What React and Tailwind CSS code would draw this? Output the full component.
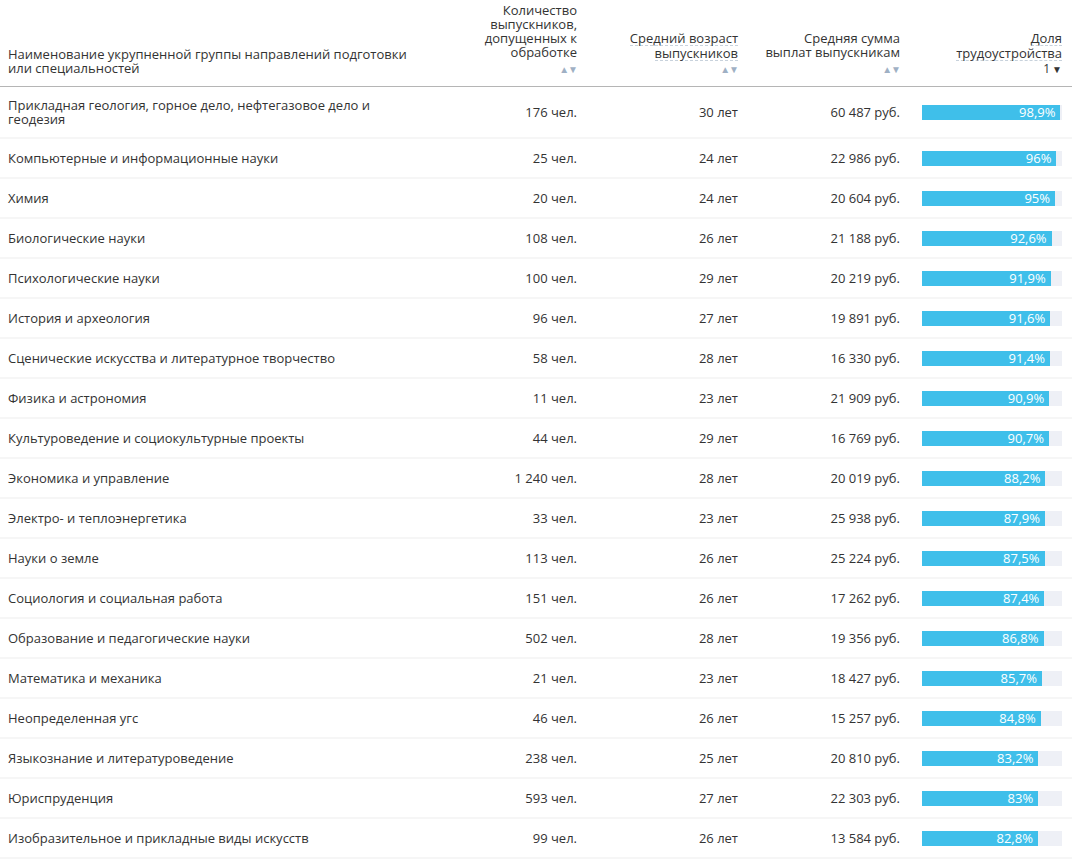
import React from "react";

const rows = [
  ["Прикладная геология, горное дело, нефтегазовое дело и геодезия", "176 чел.", "30 лет", "60 487 руб.", 98.9],
  ["Компьютерные и информационные науки", "25 чел.", "24 лет", "22 986 руб.", 96],
  ["Химия", "20 чел.", "24 лет", "20 604 руб.", 95],
  ["Биологические науки", "108 чел.", "26 лет", "21 188 руб.", 92.6],
  ["Психологические науки", "100 чел.", "29 лет", "20 219 руб.", 91.9],
  ["История и археология", "96 чел.", "27 лет", "19 891 руб.", 91.6],
  ["Сценические искусства и литературное творчество", "58 чел.", "28 лет", "16 330 руб.", 91.4],
  ["Физика и астрономия", "11 чел.", "23 лет", "21 909 руб.", 90.9],
  ["Культуроведение и социокультурные проекты", "44 чел.", "29 лет", "16 769 руб.", 90.7],
  ["Экономика и управление", "1 240 чел.", "28 лет", "20 019 руб.", 88.2],
  ["Электро- и теплоэнергетика", "33 чел.", "23 лет", "25 938 руб.", 87.9],
  ["Науки о земле", "113 чел.", "26 лет", "25 224 руб.", 87.5],
  ["Социология и социальная работа", "151 чел.", "26 лет", "17 262 руб.", 87.4],
  ["Образование и педагогические науки", "502 чел.", "28 лет", "19 356 руб.", 86.8],
  ["Математика и механика", "21 чел.", "23 лет", "18 427 руб.", 85.7],
  ["Неопределенная угс", "46 чел.", "26 лет", "15 257 руб.", 84.8],
  ["Языкознание и литературоведение", "238 чел.", "25 лет", "20 810 руб.", 83.2],
  ["Юриспруденция", "593 чел.", "27 лет", "22 303 руб.", 83],
  ["Изобразительное и прикладные виды искусств", "99 чел.", "26 лет", "13 584 руб.", 82.8],
];

const grid = "grid grid-cols-[440px_145px_161px_162px_164px]";

function Sort() {
  return (
    <div className="h-[14px] leading-[14px] text-[10px] text-[#9fb0c4] tracking-[-1px]">▲▼</div>
  );
}

function fmt(v) {
  return String(v).replace(".", ",") + "%";
}

export default function App() {
  return (
    <div
      className="w-[1072px] bg-white text-[#333] text-[13px] leading-[14px]"
      style={{ fontFamily: '"Open Sans", "Liberation Sans", sans-serif' }}
    >
      <div className={`${grid} h-[87px] border-b border-[#b5b5b5] items-end pb-[10px]`}>
        <div className="pl-2 pb-[1px]">
          Наименование укрупненной группы направлений подготовки
          <br />
          или специальностей
        </div>
        <div className="pr-2 text-right">
          <div>Количество<br />выпускников,<br />допущенных к<br />обработке</div>
          <div className="mt-[3px]"><Sort /></div>
        </div>
        <div className="pr-2 text-right">
          <div className="flex flex-col items-end">
            <span className="border-b border-dashed border-[#c8d2dc]">Средний возраст</span>
            <span className="border-b border-dashed border-[#c8d2dc]">выпускников</span>
          </div>
          <div className="mt-[1px]"><Sort /></div>
        </div>
        <div className="pr-2 text-right">
          <div>Средняя сумма<br />выплат выпускникам</div>
          <div className="mt-[3px]"><Sort /></div>
        </div>
        <div className="pr-[10px] text-right">
          <div className="flex flex-col items-end">
            <span className="border-b border-dashed border-[#c8d2dc]">Доля</span>
            <span className="border-b border-dashed border-[#c8d2dc]">трудоустройства</span>
          </div>
          <div className="mt-[1px] h-[14px] leading-[14px] text-[12px]">1<span className="text-[10px] ml-[2px]">▼</span></div>
        </div>
      </div>
      {rows.map((r, i) => (
        <div
          key={i}
          className={`${grid} items-center border-b-2 border-[#f6f6f6] ${i === 0 ? "h-[52px]" : "h-[40px]"}`}
        >
          <div className="pl-2 pr-4">{i === 0 ? <>Прикладная геология, горное дело, нефтегазовое дело и<br />геодезия</> : r[0]}</div>
          <div className="pr-2 text-right">{r[1]}</div>
          <div className="pr-2 text-right">{r[2]}</div>
          <div className="pr-2 text-right">{r[3]}</div>
          <div className="pl-[14px] pr-[10px]">
            <div className="h-[15px] bg-[#eef0f6] w-full">
              <div
                className="h-full bg-[#3fbfea] text-white text-right pr-[5px] leading-[15px]"
                style={{ width: `${r[4]}%` }}
              >
                {fmt(r[4])}
              </div>
            </div>
          </div>
        </div>
      ))}
    </div>
  );
}
